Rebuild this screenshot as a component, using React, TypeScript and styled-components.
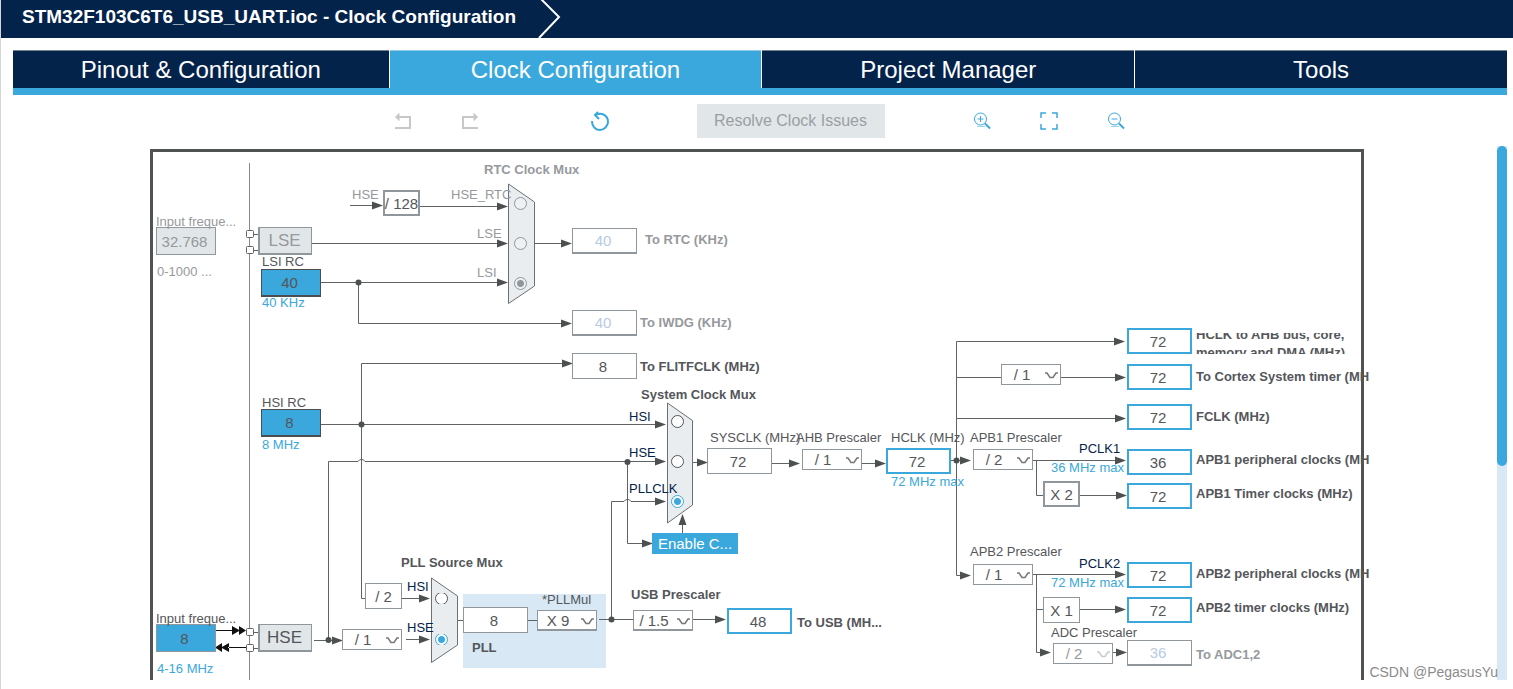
import React from "react";
import styled, { createGlobalStyle, css } from "styled-components";

const navy = "#03234b";
const blue = "#3aa8dc";
const pale = "#d9e8f5";
const ink = "#54565a";
const muted = "#96999d";
const edge = "#8f979d";
const wire = "#5f6364";
const head = "#4d5051";

/* Sheet coordinates of the top left corner of the clock tree. */
const ORIGIN = { x: 150, y: 149 };

const GlobalStyle = createGlobalStyle`
  * { box-sizing: border-box; }
  body { margin: 0; background: #fff; }
  body, button, input, select {
    font-family: "Liberation Sans", Arial, sans-serif;
  }
`;

const Page = styled.div`
  display: flex;
  flex-direction: column;
  height: 100vh;
  border-left: 1px solid #d4d6d8;
  padding-bottom: 9px;
  overflow: hidden;
`;

const TitleBar = styled.header`
  display: flex;
  align-items: center;
  flex: none;
  gap: 8px;
  height: 38px;
  padding-left: 21px;
  background: ${navy};
  color: #fff;
`;

const Title = styled.h1`
  margin: 0;
  min-width: 508px;
  font-size: 19px;
  line-height: 34px;
  padding-bottom: 4px;
  font-weight: bold;
  white-space: nowrap;
`;

const Content = styled.div`
  display: flex;
  flex-direction: column;
  flex: 1;
  min-height: 0;
  margin: 12px 6px 0 12px;
`;

const Tabs = styled.nav`
  display: grid;
  grid-template-columns: 101fr 100fr 100fr 100fr;
  gap: 1px;
  flex: none;
  border-bottom: 7px solid ${blue};
`;

const Tab = styled.button<{ $active?: boolean }>`
  height: 38px;
  padding: 1px 0 0;
  border: 0;
  border-top: 1px solid ${(p) => (p.$active ? "#8fcdea" : "#76818f")};
  background: ${(p) => (p.$active ? blue : navy)};
  color: #fff;
  font-size: 24px;
`;

const Toolbar = styled.div`
  display: flex;
  flex: none;
  align-items: center;
  justify-content: center;
  gap: 88px;
  height: 51px;
  padding: 1px 2px 0 0;
`;

const History = styled.div`
  display: flex;
  gap: 49px;
  margin-right: 24px;
`;

const ZoomGroup = styled.div`
  display: flex;
  gap: 49px;
`;

const IconButton = styled.button<{ $off?: boolean }>`
  display: flex;
  width: 18px;
  height: 20px;
  padding: 0;
  border: 0;
  background: none;
  color: ${(p) => (p.$off ? "#c6c8c9" : blue)};
`;

const ResolveButton = styled.button`
  width: 188px;
  height: 34px;
  padding: 0;
  border: 0;
  background: #e1e6e9;
  color: #9b9fa3;
  font-size: 16px;
`;

const Workspace = styled.main`
  position: relative;
  display: flex;
  flex: 1;
  min-height: 0;
`;

const Viewport = styled.div`
  flex: 1;
  min-width: 0;
  padding: 3px 0 0 4px;
  overflow: hidden;
`;

const ScrollTrack = styled.div`
  flex: none;
  width: 10px;
  background: ${pale};
`;

const ScrollThumb = styled.div`
  height: 60%;
  border-radius: 5px;
  background: ${blue};
`;

const Watermark = styled.span`
  position: absolute;
  right: 9px;
  bottom: 0;
  color: #8b8b8b;
  font-size: 14px;
  line-height: 16px;
`;

const Canvas = styled.div`
  position: relative;
  width: 1214px;
  height: 700px;
  margin: 0 auto;
  border: 3px solid #4f5354;
`;

/* The frame is drawn by the border, so the sheet starts outside it. */
const Sheet = styled.div`
  position: absolute;
  left: -3px;
  top: -3px;
`;

const Wires = styled.svg`
  position: absolute;
  left: 0;
  top: 0;
  overflow: visible;
`;

interface Place {
  $x: number;
  $y: number;
}

const placed = css<Place>`
  position: absolute;
  left: ${(p) => p.$x - ORIGIN.x}px;
  top: ${(p) => p.$y - ORIGIN.y}px;
`;

const Label = styled.label<Place & { $tone?: string; $bold?: boolean }>`
  ${placed}
  color: ${(p) => p.$tone ?? ink};
  font-size: 13px;
  line-height: 16px;
  font-weight: ${(p) => (p.$bold ? "bold" : "normal")};
  white-space: nowrap;
`;

const TwoLineLabel = styled.label<Place>`
  ${placed}
  display: flex;
  align-items: center;
  width: 174px;
  height: 21px;
  overflow: hidden;
  color: ${ink};
  font-size: 13px;
  font-weight: bold;
  line-height: 18px;
`;

type Kind = "plain" | "off" | "target" | "source" | "external" | "locked";

const kinds: Record<Kind, ReturnType<typeof css>> = {
  plain: css`
    border: 1px solid ${edge};
    background: #fff;
    color: ${ink};
  `,
  off: css`
    border: 1px solid ${edge};
    border-bottom-width: 2px;
    background: #fff;
    color: #b7cbe3;
  `,
  target: css`
    border: 2px solid ${blue};
    background: #fff;
    color: ${ink};
  `,
  source: css`
    border: 1px solid #4a4e50;
    border-bottom-width: 2px;
    background: ${blue};
    color: ${ink};
  `,
  external: css`
    border: 1px solid ${edge};
    background: ${blue};
    color: ${ink};
  `,
  locked: css`
    border: 1px solid ${edge};
    background: #e1e6e9;
    color: ${muted};
  `,
};

const Value = styled.input<Place & { $kind: Kind }>`
  ${placed}
  width: ${(p) => (["source", "external", "locked"].includes(p.$kind) ? 60 : 65)}px;
  height: ${(p) => (["source", "external", "locked"].includes(p.$kind) ? 28 : 26)}px;
  padding: 0 3px 0 0;
  border-radius: 0;
  outline: 0;
  font-size: 15px;
  text-align: center;
  ${(p) => kinds[p.$kind]}
`;

const Factor = styled.span<Place & { $thick?: boolean }>`
  ${placed}
  display: flex;
  align-items: center;
  justify-content: center;
  width: 37px;
  height: 26px;
  border: ${(p) => (p.$thick ? 2 : 1)}px solid ${edge};
  background: #fff;
  color: ${ink};
  font-size: 15px;
  white-space: nowrap;
`;

const PickerBox = styled.span<Place & { $off?: boolean; $thick?: boolean }>`
  ${placed}
  width: 60px;
  height: 21px;
  border: 1px solid ${edge};
  border-bottom-width: ${(p) => (p.$thick ? 2 : 1)}px;
  background: #fff;
  color: ${(p) => (p.$off ? muted : ink)};

  select {
    display: block;
    width: 100%;
    height: 100%;
    padding: 0 18px 0 0;
    border: 0;
    outline: 0;
    appearance: none;
    background: none;
    color: inherit;
    font-size: 15px;
    text-align: center;
    text-align-last: center;
  }

  svg {
    position: absolute;
    right: 2px;
    top: 6px;
    pointer-events: none;
    opacity: ${(p) => (p.$off ? 0.5 : 0.8)};
  }
`;

const Radio = styled.input.attrs({ type: "radio" })<Place & { $tone: string; $cut?: boolean }>`
  ${placed}
  width: 13px;
  height: 13px;
  margin: 0;
  appearance: none;
  border: 1px solid ${(p) => p.$tone};
  border-radius: 50%;
  background: ${(p) => (p.$tone === edge ? "#edf1f3" : "#fff")};
  clip-path: ${(p) => (p.$cut ? "inset(1px 0)" : "none")};

  &:checked {
    border-color: ${(p) => (p.$tone === edge ? edge : blue)};
    background: radial-gradient(
      circle,
      ${(p) => (p.$tone === edge ? edge : blue)} 0 3px,
      ${(p) => (p.$tone === edge ? "#edf1f3" : "#fff")} 4px
    );
  }
`;

const Oscillator = styled.button<Place & { $off?: boolean }>`
  ${placed}
  width: 54px;
  height: 28px;
  padding: 0 2px 0 0;
  border: 1px solid ${edge};
  border-left-width: 2px;
  border-bottom-width: 2px;
  background: #e1e6e9;
  color: ${(p) => (p.$off ? muted : ink)};
  font-size: 17px;
`;

const EnableButton = styled.button<Place>`
  ${placed}
  width: 86px;
  height: 21px;
  padding: 0;
  border: 0;
  background: ${blue};
  color: #fff;
  font-size: 15px;
`;

const PllPanel = styled.div<Place>`
  ${placed}
  width: 143px;
  height: 74px;
  background: ${pale};
`;

const UndoIcon = ({ flip }: { flip?: boolean }) => (
  <svg width="18" height="20" viewBox="0 0 18 20" fill="none" stroke="currentColor" strokeWidth="2">
    <g transform={flip ? "matrix(-1 0 0 1 18 0)" : undefined}>
      <path d="M3 6H16V17H1" />
      <path d="M5 2.500L1.500 6L5 9.500Z" fill="currentColor" strokeWidth="1" />
    </g>
  </svg>
);

const ResetIcon = () => (
  <svg width="18" height="20" viewBox="0 0 18 20" fill="none" stroke="currentColor" strokeWidth="2">
    <path d="M5 4C10 1 17 4 17 11C17 15 13 19 9 19C4 19 1 15 1 10" />
    <path d="M7 1L4 4L8 8" strokeWidth="2" />
  </svg>
);

const LensIcon = ({ plus }: { plus?: boolean }) => (
  <svg width="18" height="20" viewBox="0 0 18 20" fill="none" stroke="currentColor">
    <circle cx="7.5" cy="8" r="6" />
    <path d="M4.500 8H10.500" />
    {plus && <path d="M7.500 5V11" />}
    <path d="M12 12.500L17 17.500" strokeWidth="2" />
    <path d="M4 15.500H12" opacity=".5" />
  </svg>
);

const FitIcon = () => (
  <svg width="18" height="20" viewBox="0 0 18 20" fill="none" stroke="currentColor" strokeWidth="1.500">
    <path d="M1 7V2H6M12 2H17V7M17 13V18H12M6 18H1V13" />
  </svg>
);

const wirePaths = [
  "M254 234.500H258M254 250.500H258M254 632.500H258M254 648.500H258",
  "M350 205.500H376M420 206.500H500",
  "M312 243.500H500M535 243.500H565",
  "M321 282.500H500M358.500 282.500V323.500H565",
  "M365 598.500H361.500V363.500H565",
  "M321 424.500H660",
  "M328.500 640V461.500H358A4 4 0 0 1 365 461.500H660",
  "M627.500 461.500V543.500H646",
  "M611.500 619.500V501.500H624A4 4 0 0 1 631 501.500H660",
  "M682.500 533V522M693 462.500H702",
  "M772 463.500H793M862 463.500H880M951 460.500H965",
  "M965 575.500H956.500V341.500H1118",
  "M956.500 377.500H1001M1061 377.500H1118M956.500 418.500H1118",
  "M1033 460.500H1118M1036.500 460.500V495.500H1043M1080 495.500H1118",
  "M1033 574.500H1118M1036.500 574.500V652.500H1044M1036.500 609.500H1043M1080 609.500H1118M1113 652.500H1120",
  "M314 640.500H336M401 598.500H424M406 639.500H424M457 620.500H463M528 620.500H537",
  "M599 619.500H633M693 619.500H719",
];

/* Tips of the arrow heads that point right. */
const tips = [
  [383, 205], [508, 206], [508, 243], [572, 243], [508, 282], [572, 323], [573, 363],
  [666, 424], [666, 461], [666, 501], [653, 543], [708, 462], [800, 463], [886, 463],
  [971, 460], [971, 575], [1125, 341], [1126, 377], [1126, 418], [1126, 460], [1127, 495],
  [1126, 574], [1126, 609], [1051, 652], [1127, 652], [343, 640], [430, 598], [430, 639],
  [726, 619],
];

const joints = [
  [358.5, 282.5], [361.5, 424.5], [627.5, 462], [956.5, 460.5], [328.5, 640], [611.5, 619.5],
];

const pins = [
  [246.5, 230.5], [246.5, 246.5], [246.5, 628.5], [246.5, 644.5],
];

const Drawing = () => (
  <Wires width="1214" height="700" viewBox="150 149 1214 700" fill="none" stroke={wire} aria-hidden="true">
    <path d="M249.500 163V849" stroke="#868a8d" />
    {wirePaths.map((d) => (
      <path key={d} d={d} />
    ))}
    <g fill="#e9edf0" stroke="#6b7074">
      <path d="M508.500 184L534.500 202V286L508.500 303.500Z" />
      <path d="M667.500 403L692.500 420.500V505L667.500 523Z" />
      <path d="M431.500 578L457.500 596V645L431.500 662.500Z" />
    </g>
    <g fill={head} stroke="none">
      {tips.map(([x, y]) => (
        <path key={`${x}-${y}`} d={`M${x} ${y + 0.5}l-11 -4v8z`} />
      ))}
      <path d="M682.500 514L678.500 525H686.500Z" />
      {joints.map(([x, y]) => (
        <circle key={`${x}-${y}`} cx={x} cy={y} r="3" />
      ))}
    </g>
    <g fill="#fff" stroke={wire}>
      {pins.map(([x, y]) => (
        <rect key={y} x={x} y={y} width="7" height="7" rx="1" />
      ))}
    </g>
    <g fill="#111" stroke="none">
      <path d="M216 630H234V631H216Z M232 626L240 630.500L232 635Z M239 626L246 630.500L239 635Z" />
      <path d="M228 647H246V648H228Z M222 643L215 647.500L222 652Z M229 643L221 647.500L229 652Z" />
    </g>
  </Wires>
);

interface PickerProps {
  id: string;
  x: number;
  y: number;
  value: string;
  name?: string;
  off?: boolean;
  thick?: boolean;
}

const Picker = ({ id, x, y, value, name, off, thick }: PickerProps) => (
  <PickerBox $x={x} $y={y} $off={off} $thick={thick}>
    <select id={id} aria-label={name} defaultValue={value}>
      <option>{value}</option>
    </select>
    <svg width="13" height="9" viewBox="0 0 13 9" fill="none" stroke="currentColor" strokeWidth="1.500">
      <path d="M0 2H2L5 6.500H8L11 2H13" />
    </svg>
  </PickerBox>
);

const values: { id: string; x: number; y: number; kind: Kind; value: string; name?: string }[] = [
  { id: "lse-in", x: 156, y: 227, kind: "locked", value: "32.768" },
  { id: "lsi", x: 261, y: 269, kind: "source", value: "40" },
  { id: "hsi", x: 261, y: 409, kind: "source", value: "8" },
  { id: "hse-in", x: 156, y: 624, kind: "external", value: "8" },
  { id: "rtc", x: 572, y: 228, kind: "off", value: "40" },
  { id: "iwdg", x: 572, y: 310, kind: "off", value: "40" },
  { id: "flit", x: 572, y: 353, kind: "plain", value: "8" },
  { id: "sysclk", x: 707, y: 448, kind: "plain", value: "72" },
  { id: "hclk", x: 886, y: 448, kind: "target", value: "72" },
  { id: "ahb-bus", x: 1127, y: 328, kind: "target", value: "72" },
  { id: "cortex", x: 1127, y: 364, kind: "target", value: "72" },
  { id: "fclk", x: 1127, y: 404, kind: "target", value: "72" },
  { id: "apb1", x: 1127, y: 449, kind: "target", value: "36" },
  { id: "apb1-timer", x: 1127, y: 483, kind: "target", value: "72" },
  { id: "apb2", x: 1127, y: 562, kind: "target", value: "72" },
  { id: "apb2-timer", x: 1127, y: 597, kind: "target", value: "72" },
  { id: "adc", x: 1127, y: 640, kind: "off", value: "36" },
  { id: "pll", x: 463, y: 607, kind: "plain", value: "8" },
  { id: "usb", x: 727, y: 608, kind: "target", value: "48" },
];

const labels: { text: string; x: number; y: number; tone?: string; bold?: boolean; to?: string }[] = [
  { text: "Input freque...", x: 156, y: 214, tone: muted, to: "lse-in" },
  { text: "0-1000 ...", x: 157, y: 264, tone: muted, to: "lse-in" },
  { text: "LSI RC", x: 262, y: 254, to: "lsi" },
  { text: "40 KHz", x: 262, y: 295, tone: blue, to: "lsi" },
  { text: "HSI RC", x: 262, y: 395, to: "hsi" },
  { text: "8 MHz", x: 262, y: 437, tone: blue, to: "hsi" },
  { text: "Input freque...", x: 156, y: 611, to: "hse-in" },
  { text: "4-16 MHz", x: 157, y: 661, tone: blue, to: "hse-in" },
  { text: "RTC Clock Mux", x: 484, y: 162, tone: muted, bold: true },
  { text: "HSE", x: 352, y: 187, tone: muted },
  { text: "HSE_RTC", x: 451, y: 187, tone: muted, to: "rtc-hse" },
  { text: "LSE", x: 477, y: 226, tone: muted, to: "rtc-lse" },
  { text: "LSI", x: 477, y: 265, tone: muted, to: "rtc-lsi" },
  { text: "To RTC (KHz)", x: 645, y: 232, tone: muted, bold: true, to: "rtc" },
  { text: "To IWDG (KHz)", x: 640, y: 315, tone: muted, bold: true, to: "iwdg" },
  { text: "To FLITFCLK (MHz)", x: 640, y: 359, bold: true, to: "flit" },
  { text: "System Clock Mux", x: 641, y: 387, bold: true },
  { text: "HSI", x: 629, y: 409, tone: navy, to: "sys-hsi" },
  { text: "HSE", x: 629, y: 445, tone: navy, to: "sys-hse" },
  { text: "PLLCLK", x: 629, y: 481, tone: navy, to: "sys-pll" },
  { text: "SYSCLK (MHz)", x: 710, y: 430, to: "sysclk" },
  { text: "AHB Prescaler", x: 796, y: 430, to: "ahb-pre" },
  { text: "HCLK (MHz)", x: 891, y: 430, to: "hclk" },
  { text: "72 MHz max", x: 891, y: 474, tone: blue, to: "hclk" },
  { text: "APB1 Prescaler", x: 970, y: 430, to: "apb1-pre" },
  { text: "PCLK1", x: 1079, y: 441, tone: navy, to: "apb1" },
  { text: "36 MHz max", x: 1051, y: 460, tone: blue, to: "apb1" },
  { text: "APB2 Prescaler", x: 970, y: 544, to: "apb2-pre" },
  { text: "PCLK2", x: 1079, y: 556, tone: navy, to: "apb2" },
  { text: "72 MHz max", x: 1051, y: 575, tone: blue, to: "apb2" },
  { text: "ADC Prescaler", x: 1051, y: 625, to: "adc-pre" },
  { text: "To Cortex System timer (MH", x: 1196, y: 369, bold: true, to: "cortex" },
  { text: "FCLK (MHz)", x: 1196, y: 409, bold: true, to: "fclk" },
  { text: "APB1 peripheral clocks (MH", x: 1196, y: 452, bold: true, to: "apb1" },
  { text: "APB1 Timer clocks (MHz)", x: 1196, y: 486, bold: true, to: "apb1-timer" },
  { text: "APB2 peripheral clocks (MH", x: 1196, y: 566, bold: true, to: "apb2" },
  { text: "APB2 timer clocks (MHz)", x: 1196, y: 600, bold: true, to: "apb2-timer" },
  { text: "To ADC1,2", x: 1196, y: 647, tone: muted, bold: true, to: "adc" },
  { text: "PLL Source Mux", x: 401, y: 555, bold: true },
  { text: "HSI", x: 407, y: 579, tone: navy, to: "pll-hsi" },
  { text: "HSE", x: 407, y: 620, tone: navy, to: "pll-hse" },
  { text: "*PLLMul", x: 542, y: 592, to: "pll-mul" },
  { text: "PLL", x: 472, y: 640, bold: true, to: "pll" },
  { text: "USB Prescaler", x: 631, y: 587, bold: true, to: "usb-pre" },
  { text: "To USB (MH...", x: 797, y: 615, bold: true, to: "usb" },
];

const radios = [
  { id: "rtc-hse", group: "rtc-mux", x: 514, y: 197, tone: edge },
  { id: "rtc-lse", group: "rtc-mux", x: 514, y: 237, tone: edge },
  { id: "rtc-lsi", group: "rtc-mux", x: 514, y: 277, tone: edge, on: true },
  { id: "sys-hsi", group: "sys-mux", x: 671, y: 415, tone: ink },
  { id: "sys-hse", group: "sys-mux", x: 671, y: 455, tone: ink },
  { id: "sys-pll", group: "sys-mux", x: 671, y: 495, tone: ink, on: true },
  { id: "pll-hsi", group: "pll-mux", x: 435, y: 592, tone: ink, cut: true },
  { id: "pll-hse", group: "pll-mux", x: 435, y: 633, tone: ink, cut: true, on: true },
];

const pickers: PickerProps[] = [
  { id: "ahb-pre", x: 802, y: 449, value: "/ 1" },
  { id: "apb1-pre", x: 973, y: 449, value: "/ 2" },
  { id: "apb2-pre", x: 973, y: 564, value: "/ 1" },
  { id: "cortex-pre", x: 1001, y: 364, value: "/ 1", name: "Cortex prescaler" },
  { id: "adc-pre", x: 1053, y: 643, value: "/ 2", off: true },
  { id: "hse-pre", x: 342, y: 629, value: "/ 1", name: "HSE prescaler" },
  { id: "pll-mul", x: 537, y: 610, value: "X 9", thick: true },
  { id: "usb-pre", x: 633, y: 610, value: "/ 1.5", thick: true },
];

const ClockTree = () => (
  <Canvas>
    <Sheet>
      <PllPanel $x={463} $y={594} />
      <Drawing />
      <Oscillator $x={258} $y={227} $off>LSE</Oscillator>
      <Oscillator $x={258} $y={624}>HSE</Oscillator>
      <Factor $x={383} $y={190} $thick>/ 128</Factor>
      <Factor $x={365} $y={583}>/ 2</Factor>
      <Factor $x={1043} $y={481} $thick>X 2</Factor>
      <Factor $x={1043} $y={597}>X 1</Factor>
      {values.map((v) => (
        <Value key={v.id} id={v.id} $x={v.x} $y={v.y} $kind={v.kind} defaultValue={v.value} />
      ))}
      {pickers.map((p) => (
        <Picker key={p.id} {...p} />
      ))}
      {radios.map((r) => (
        <Radio
          key={r.id}
          id={r.id}
          name={r.group}
          $x={r.x}
          $y={r.y}
          $tone={r.tone}
          $cut={r.cut}
          defaultChecked={r.on}
        />
      ))}
      <EnableButton $x={652} $y={533}>Enable C...</EnableButton>
      {labels.map((l) => (
        <Label
          key={`${l.x}-${l.y}`}
          as={l.to ? "label" : "span"}
          htmlFor={l.to}
          $x={l.x}
          $y={l.y}
          $tone={l.tone}
          $bold={l.bold}
        >
          {l.text}
        </Label>
      ))}
      <TwoLineLabel htmlFor="ahb-bus" $x={1196} $y={333}>
        HCLK to AHB bus, core, memory and DMA (MHz)
      </TwoLineLabel>
    </Sheet>
  </Canvas>
);

export default function App() {
  return (
    <Page>
      <GlobalStyle />
      <TitleBar>
        <Title>STM32F103C6T6_USB_UART.ioc - Clock Configuration</Title>
        <svg width="24" height="38" viewBox="0 0 24 38" fill="none" stroke="#fff" strokeWidth="2" aria-hidden="true">
          <path d="M3 -1L21 17L1 38" />
        </svg>
      </TitleBar>
      <Content>
        <Tabs>
          <Tab>Pinout &amp; Configuration</Tab>
          <Tab $active>Clock Configuration</Tab>
          <Tab>Project Manager</Tab>
          <Tab>Tools</Tab>
        </Tabs>
        <Toolbar>
          <History>
            <IconButton $off aria-label="Undo"><UndoIcon /></IconButton>
            <IconButton $off aria-label="Redo"><UndoIcon flip /></IconButton>
          </History>
          <IconButton aria-label="Reset clocks"><ResetIcon /></IconButton>
          <ResolveButton>Resolve Clock Issues</ResolveButton>
          <ZoomGroup>
            <IconButton aria-label="Zoom in"><LensIcon plus /></IconButton>
            <IconButton aria-label="Fit"><FitIcon /></IconButton>
            <IconButton aria-label="Zoom out"><LensIcon /></IconButton>
          </ZoomGroup>
        </Toolbar>
        <Workspace>
          <Viewport>
            <ClockTree />
          </Viewport>
          <ScrollTrack>
            <ScrollThumb />
          </ScrollTrack>
          <Watermark>CSDN @PegasusYu</Watermark>
        </Workspace>
      </Content>
    </Page>
  );
}
